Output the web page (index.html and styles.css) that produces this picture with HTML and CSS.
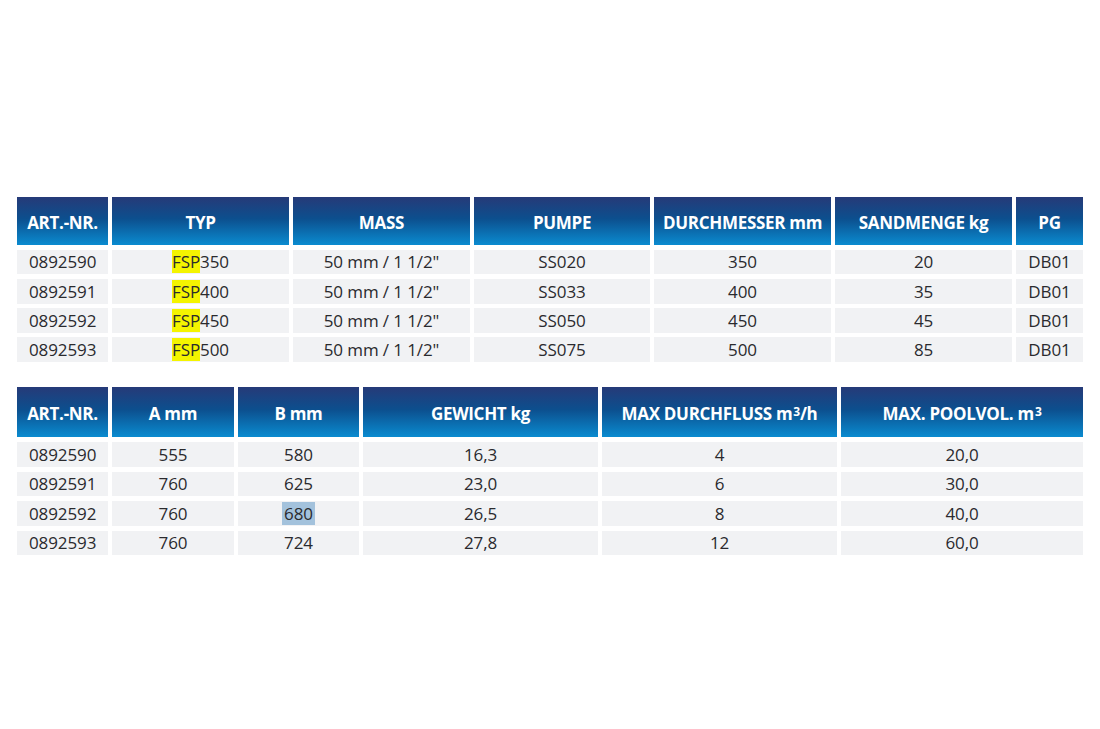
FILE: index.html
```html
<!DOCTYPE html>
<html>
<head>
    <meta charset="utf-8" />
    <title>Sandfilteranlagen</title>
    <link rel="stylesheet" href="styles.css">
</head>
<body>
    <div class="sheet">
        <div class="grid grid-a">
            <div class="head">ART.-NR.</div>
            <div class="head">TYP</div>
            <div class="head">MASS</div>
            <div class="head">PUMPE</div>
            <div class="head">DURCHMESSER mm</div>
            <div class="head">SANDMENGE kg</div>
            <div class="head">PG</div>

            <div class="cell left">0892590</div>
            <div class="cell"><span class="mark">FSP</span>350</div>
            <div class="cell">50 mm / 1 1/2"</div>
            <div class="cell">SS020</div>
            <div class="cell">350</div>
            <div class="cell">20</div>
            <div class="cell">DB01</div>

            <div class="cell left">0892591</div>
            <div class="cell"><span class="mark">FSP</span>400</div>
            <div class="cell">50 mm / 1 1/2"</div>
            <div class="cell">SS033</div>
            <div class="cell">400</div>
            <div class="cell">35</div>
            <div class="cell">DB01</div>

            <div class="cell left">0892592</div>
            <div class="cell"><span class="mark">FSP</span>450</div>
            <div class="cell">50 mm / 1 1/2"</div>
            <div class="cell">SS050</div>
            <div class="cell">450</div>
            <div class="cell">45</div>
            <div class="cell">DB01</div>

            <div class="cell left">0892593</div>
            <div class="cell"><span class="mark">FSP</span>500</div>
            <div class="cell">50 mm / 1 1/2"</div>
            <div class="cell">SS075</div>
            <div class="cell">500</div>
            <div class="cell">85</div>
            <div class="cell">DB01</div>
        </div>

        <div class="grid grid-b">
            <div class="head">ART.-NR.</div>
            <div class="head">A mm</div>
            <div class="head">B mm</div>
            <div class="head">GEWICHT kg</div>
            <div class="head">MAX DURCHFLUSS m<sup>3</sup>/h</div>
            <div class="head">MAX. POOLVOL. m<sup>3</sup></div>

            <div class="cell left">0892590</div>
            <div class="cell">555</div>
            <div class="cell">580</div>
            <div class="cell">16,3</div>
            <div class="cell">4</div>
            <div class="cell">20,0</div>

            <div class="cell left">0892591</div>
            <div class="cell">760</div>
            <div class="cell">625</div>
            <div class="cell">23,0</div>
            <div class="cell">6</div>
            <div class="cell">30,0</div>

            <div class="cell left">0892592</div>
            <div class="cell">760</div>
            <div class="cell"><span class="sel">680</span></div>
            <div class="cell">26,5</div>
            <div class="cell">8</div>
            <div class="cell">40,0</div>

            <div class="cell left">0892593</div>
            <div class="cell">760</div>
            <div class="cell">724</div>
            <div class="cell">27,8</div>
            <div class="cell">12</div>
            <div class="cell">60,0</div>
        </div>
    </div>
</body>
</html>
```

FILE: styles.css
```css
html, body {
    margin: 0;
    background-color: #fff;
    font-family: "Open Sans", "Liberation Sans", sans-serif;
}

.sheet {
    width: 1066px;
    padding: 197px 0 0 17px;
    display: flex;
    flex-direction: column;
    gap: 25px;
}

.grid {
    display: grid;
    column-gap: 4px;
}

.grid-a {
    grid-template-columns: 91px 177px 177px 176px 177px 177px 67px;
    grid-template-rows: 48px repeat(4, 24.8px);
    row-gap: 4.5px;
}

.grid-b {
    grid-template-columns: 91px 122px 121px 235px 235px 242px;
    grid-template-rows: 50px repeat(4, 24.5px);
    row-gap: 5px;
}

    .grid .head {
        display: flex;
        align-items: center;
        justify-content: center;
        padding-top: 3px;
        background: linear-gradient(to bottom, #263a78 0%, #0c4f8e 45%, #0a8bd0 100%);
        color: #fff;
        font-size: 17px;
        font-weight: 700;
        white-space: nowrap;
        letter-spacing: -0.3px;
    }

        .grid .head sup {
            font-size: 12px;
            line-height: 0;
            position: relative;
            top: -2px;
            margin-left: 1px;
        }

    .grid .cell {
        display: flex;
        align-items: center;
        justify-content: center;
        background-color: #f1f2f4;
        color: #2a2a2e;
        font-size: 17px;
        white-space: nowrap;
        letter-spacing: -0.1px;
    }

    .grid .left {
        justify-content: flex-start;
        padding-left: 12px;
    }

.mark {
    background-color: #f4f400;
}

.sel {
    background-color: #a3c2dc;
    padding: 0 2px;
}
```
